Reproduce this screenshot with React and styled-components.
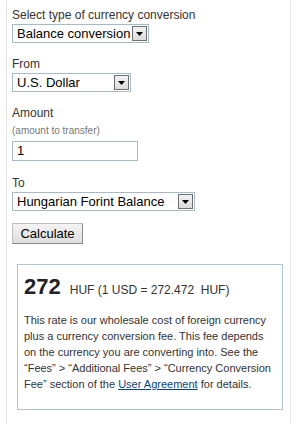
import React from 'react';
import styled, { createGlobalStyle } from 'styled-components';

const GlobalStyle = createGlobalStyle`
  body {
    margin: 0;
    background: #fff;
    font-family: "Liberation Sans", Arial, sans-serif;
  }
`;

// Outer column with faint side rules
const Panel = styled.div`
  margin-left: 6px;
  width: 285px;
  height: 424px;
  border-left: 1px solid #e6e6e6;
  border-right: 1px solid #e6e6e6;
  padding: 7px 0 0 5px;
  box-sizing: border-box;
  color: #333;
`;

const Field = styled.div`
  display: flex;
  flex-direction: column;
  align-items: flex-start;
  margin-bottom: ${p => p.$gap || 13}px;
`;

const Label = styled.label`
  font-size: 12px;
  line-height: 16px;
  margin-bottom: 1px;
`;

const Hint = styled.span`
  font-size: 10px;
  line-height: 14px;
  color: #777;
  margin: 2px 0 3px;
`;

// Fake native select
const Select = styled.div`
  display: flex;
  align-items: center;
  justify-content: space-between;
  width: ${p => p.$width}px;
  height: 19px;
  border: 1px solid #a7bacd;
  box-sizing: border-box;
  padding: 0 1px 0 4px;
  font-size: 13px;
  color: #000;
  background: #fff;
`;

const DropButton = styled.span`
  display: flex;
  align-items: center;
  justify-content: center;
  width: 15px;
  height: 15px;
  box-sizing: border-box;
  border: 1px solid #6f6f6f;
  background: linear-gradient(#f2f2f2, #dcdcdc);
`;

const Input = styled.div`
  width: 126px;
  height: 20px;
  box-sizing: border-box;
  border: 1px solid #a7bacd;
  padding: 1px 4px;
  font-size: 13px;
  line-height: 16px;
  color: #000;
`;

const Button = styled.button`
  width: 71px;
  height: 21px;
  padding: 0;
  border: 1px solid #8c8c8c;
  border-top-color: #bdbdbd;
  border-left-color: #bdbdbd;
  background: linear-gradient(#f4f4f4, #dedede);
  font-family: "Liberation Sans", Arial, sans-serif;
  font-size: 13px;
  color: #000;
  margin-bottom: 20px;
`;

const ResultBox = styled.div`
  margin-left: 5px;
  width: 266px;
  box-sizing: border-box;
  border: 1px solid #b2c5d8;
  padding: 9px 5px 17px 6px;
`;

const Headline = styled.div`
  display: flex;
  align-items: baseline;
  gap: 9px;
  margin-bottom: 12px;
`;

const Big = styled.span`
  font-size: 22px;
  font-weight: bold;
  color: #222;
`;

const Rate = styled.span`
  font-size: 12px;
  color: #333;
`;

const Note = styled.p`
  margin: 0;
  font-size: 11px;
  line-height: 16px;
  color: #333;
`;

const Link = styled.a`
  color: #084482;
  text-decoration: underline;
`;

const Arrow = () => (
  <svg width="7" height="4" viewBox="0 0 7 4">
    <path d="M0 0h7L3.5 4z" fill="#000" />
  </svg>
);

const Dropdown = ({ width, children }) => (
  <Select $width={width}>
    <span>{children}</span>
    <DropButton><Arrow /></DropButton>
  </Select>
);

export default function App() {
  return (
    <>
      <GlobalStyle />
      <Panel>
        <Field>
          <Label>Select type of currency conversion</Label>
          <Dropdown width={137}>Balance conversion</Dropdown>
        </Field>
        <Field>
          <Label>From</Label>
          <Dropdown width={119}>U.S. Dollar</Dropdown>
        </Field>
        <Field $gap={14}>
          <Label>Amount</Label>
          <Hint>(amount to transfer)</Hint>
          <Input>1</Input>
        </Field>
        <Field $gap={12}>
          <Label>To</Label>
          <Dropdown width={183}>Hungarian Forint Balance</Dropdown>
        </Field>
        <Button>Calculate</Button>
        <ResultBox>
          <Headline>
            <Big>272</Big>
            <Rate>HUF (1 USD = 272.472&nbsp; HUF)</Rate>
          </Headline>
          <Note>
            This rate is our wholesale cost of foreign currency plus a currency
            conversion fee. This fee depends on the currency you are converting
            into. See the “Fees” &gt; “Additional Fees” &gt; “Currency Conversion
            Fee” section of the <Link href="#">User Agreement</Link> for details.
          </Note>
        </ResultBox>
      </Panel>
    </>
  );
}
